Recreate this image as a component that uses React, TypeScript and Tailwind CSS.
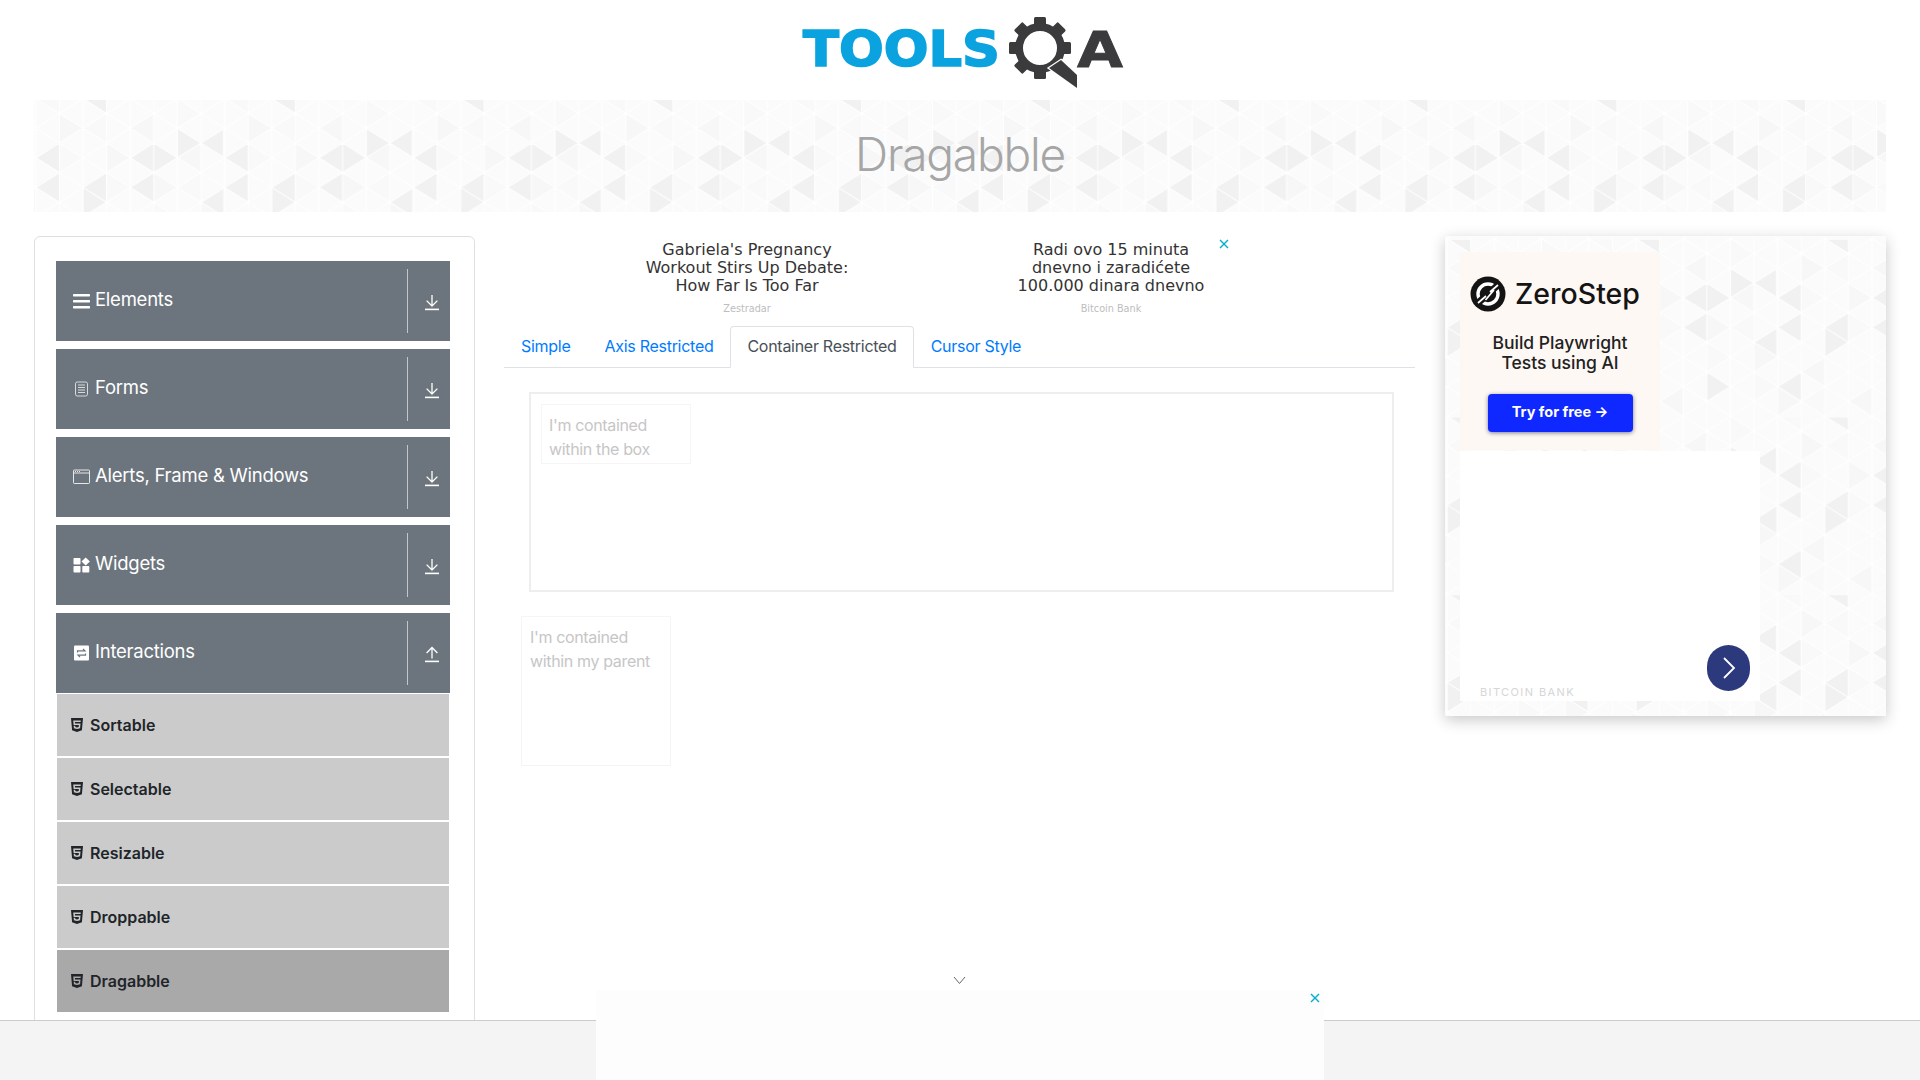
import { FaHtml5 } from "react-icons/fa";

const F = "font-['Inter',sans-serif]";

const DARK: [number, number, number][] = [
  [1, 43, -1], [5, 43, -1], [5, 43, 1], [1, 72.6, -1], [3, 72.6, -1], [5, 72.6, -1], [2, 87.4, 1],
  [3, -16.2, -1], [6, 28.2, 1], [8, 28.2, -1], [8, 87.4, -1], [1, 131.8, -1], [5, 131.8, 1],
];

function triangles() {
  const out: { pts: string; fill: string }[] = [];
  for (let i = -1; i < 10; i++) {
    const baseY = i % 2 === 0 ? 28.2 : 13.4;
    for (let j = -2; j < 7; j++) {
      const y = baseY + j * 29.6;
      const x = 1.8 + i * 23.6;
      for (const d of [-1, 1]) {
        const seed = (i * 7 + j * 13 + (d + 1) * 5 + 100) % 9;
        if (seed === 0 || seed === 4) {
          out.push({ pts: `${x},${y} ${x},${y + 29.6} ${x + d * 23.6},${y + 14.8}`, fill: seed === 0 ? "#f7f7f7" : "#f9f9f9" });
        }
      }
    }
  }
  for (const [c, y, d] of DARK) {
    const x = 1.8 + c * 23.6;
    out.push({ pts: `${x},${y} ${x},${y + 29.6} ${x + d * 23.6},${y + 14.8}`, fill: "#f1f1f1" });
  }
  return out;
}

function lattice() {
  const segs: string[] = [];
  for (let i = -1; i < 10; i++) {
    const x = 1.8 + i * 23.6;
    segs.push(`M${x} -20V200`);
    const baseY = i % 2 === 0 ? 28.2 : 13.4;
    for (let j = -2; j < 7; j++) {
      const y = baseY + j * 29.6;
      segs.push(`M${x} ${y}L${x + 23.6} ${y + 14.8}M${x} ${y}L${x + 23.6} ${y - 14.8}`);
    }
  }
  return segs.join("");
}

function Pattern({ id, dx, dy }: { id: string; dx: number; dy: number }) {
  return (
    <svg className="absolute inset-0 h-full w-full" aria-hidden="true">
      <defs>
        <pattern id={id} width="188.8" height="177.6" patternUnits="userSpaceOnUse" patternTransform={`translate(${dx} ${dy})`}>
          <rect width="188.8" height="177.6" fill="#fbfbfb" />
          {triangles().map((t, k) => (
            <polygon key={k} points={t.pts} fill={t.fill} />
          ))}
          <path d={lattice()} stroke="#ffffff" strokeWidth="1.1" fill="none" />
        </pattern>
      </defs>
      <rect width="100%" height="100%" fill={`url(#${id})`} />
    </svg>
  );
}

function Logo() {
  const teeth = [0, 45, 90, 135, 180, 225, 270, 315];
  return (
    <svg width="325" height="76" viewBox="0 0 325 76" aria-label="ToolsQA">
      <text x="4" y="51" fontFamily="'DejaVu Sans', sans-serif" fontWeight="700" fontSize="50" fill="#0aa3df" stroke="#0aa3df" strokeWidth="1.6" textLength="197" lengthAdjust="spacingAndGlyphs">TOOLS</text>
      <g transform="translate(241 33)">
        {teeth.map((a) => (
          <rect key={a} x="-6" y="-31" width="12" height="11" rx="1.5" fill="#3b3b3d" transform={`rotate(${a})`} />
        ))}
        <circle r="21" fill="none" stroke="#3b3b3d" strokeWidth="8" />
      </g>
      <path d="M250 53l12-8 16 15v13z" fill="#3b3b3d" stroke="#ffffff" strokeWidth="2.5" paintOrder="stroke" />
      <text x="278" y="52" fontFamily="'DejaVu Sans', sans-serif" fontWeight="700" fontSize="50" fill="#3b3b3d" stroke="#3b3b3d" strokeWidth="0.8" textLength="46" lengthAdjust="spacingAndGlyphs">A</text>
    </svg>
  );
}

function Arrow({ up }: { up?: boolean }) {
  return (
    <svg width="16" height="17" viewBox="0 0 16 17" fill="none" stroke="#fff" strokeWidth="1.3">
      {up ? <path d="M8 12.5V1.5M2.6 7L8 1.5 13.4 7" /> : <path d="M8 1v11M2.6 6.6L8 12l5.4-5.4" />}
      <path d="M1 15.4h14" strokeWidth="1.6" />
    </svg>
  );
}

function GroupIcon({ kind }: { kind: string }) {
  if (kind === "menu")
    return (
      <svg width="17" height="16" viewBox="0 0 17 16" fill="#fff">
        <rect y="1" width="17" height="2.4" rx="0.6" />
        <rect y="7" width="17" height="2.4" rx="0.6" />
        <rect y="13" width="17" height="2.4" rx="0.6" />
      </svg>
    );
  if (kind === "form")
    return (
      <svg width="17" height="16" viewBox="0 0 17 16" fill="none" stroke="#d8dadc" strokeWidth="1">
        <rect x="2.5" y="1" width="12" height="14" rx="1.8" />
        <path d="M5 4h7M5 6.5h7M5 9h7M5 11.5h7" />
      </svg>
    );
  if (kind === "window")
    return (
      <svg width="17" height="16" viewBox="0 0 17 16" fill="none" stroke="#e6e7e9" strokeWidth="1">
        <rect x="0.5" y="1" width="16" height="13.5" rx="0.8" />
        <path d="M0.5 4h16" />
        <path d="M2 2.5h1M4 2.5h1M6 2.5h1" />
      </svg>
    );
  if (kind === "widgets")
    return (
      <svg width="17" height="16" viewBox="0 0 17 16" fill="#fff">
        <rect x="0.5" y="1" width="7" height="6.5" rx="0.8" />
        <path d="M12.7 0.4l4.2 4.1-4.2 4.1-4.2-4.1z" />
        <rect x="0.5" y="9" width="7" height="6.5" rx="0.8" />
        <rect x="9.3" y="9" width="7" height="6.5" rx="0.8" />
      </svg>
    );
  return (
    <svg width="17" height="16" viewBox="0 0 17 16">
      <rect x="1" y="0.5" width="15" height="15" rx="1" fill="#fff" />
      <path d="M4.5 7.5V5.8h7.5L10 3.8M12.5 8.5v1.7H5l2 2" stroke="#6c757d" strokeWidth="1.2" fill="none" />
    </svg>
  );
}

function Group({ icon, label, open }: { icon: string; label: string; open?: boolean }) {
  return (
    <div className={`flex h-20 items-center bg-[#6c757d] pl-[17px] text-white ${open ? "" : "mb-2"}`}>
      <div className="flex h-16 flex-1 items-center">
        <div className="mb-[1px] flex w-[17px] shrink-0 items-center justify-center"><GroupIcon kind={icon} /></div>
        <span className="mb-[4px] ml-[5px] text-[18.5px] leading-6 tracking-[-0.25px]">{label}</span>
      </div>
      <div className="flex h-16 w-[43px] items-center justify-center border-l border-[#c4c7ca] pl-[6px] pt-[2px]">
        <Arrow up={open} />
      </div>
    </div>
  );
}

function Item({ label, active }: { label: string; active?: boolean }) {
  return (
    <div className={`mx-[1px] mb-[2px] flex h-[62px] items-center pl-[12px] text-[16px] font-semibold text-[#212529] ${active ? "bg-[#a9a9a9]" : "bg-[#cbcbcb]"}`}>
      <FaHtml5 size={16} className="shrink-0" />
      <span className="ml-[5px]">{label}</span>
    </div>
  );
}

function AdText({ lines, source }: { lines: string[]; source: string }) {
  return (
    <div className="flex w-[364px] flex-col items-center pt-[5px]">
      <div className="text-center font-['DejaVu_Sans',sans-serif] text-[16px] leading-[18px] text-[#333]">
        {lines.map((l) => (
          <div key={l}>{l}</div>
        ))}
      </div>
      <div className="mt-[8px] font-['DejaVu_Sans',sans-serif] text-[9.7px] leading-3 text-[#bdbdbd]">{source}</div>
    </div>
  );
}

function Close({ className }: { className: string }) {
  return (
    <svg className={className} width="10" height="10" viewBox="0 0 10 10" stroke="#00aecd" strokeWidth="1.4" fill="none">
      <path d="M1 1l8 8M9 1L1 9" />
    </svg>
  );
}

export default function App() {
  return (
    <div className={`relative h-[1080px] w-[1920px] overflow-hidden bg-white ${F}`}>
      <header className="flex h-[100px] items-start justify-center pl-[3px] pt-[15px]">
        <Logo />
      </header>

      <div className="relative mx-[34px] flex h-[112px] items-center justify-center overflow-hidden">
        <Pattern id="p1" dx={0} dy={0} />
        <h1 className="relative mb-[4px] text-[46px] font-light leading-[58px] tracking-[-1.2px] text-[#a6a6a6]">Dragabble</h1>
      </div>

      <div className="mx-[34px] mt-[24px] flex items-start">
        <aside className="h-[900px] w-[441px] shrink-0 rounded-md border border-[#dfdfdf] pl-[21px] pr-[24px] pt-[24px]">
          <Group icon="menu" label="Elements" />
          <Group icon="form" label="Forms" />
          <Group icon="window" label="Alerts, Frame & Windows" />
          <Group icon="widgets" label="Widgets" />
          <Group icon="inter" label="Interactions" open />
          <div className="pt-[1px]">
            <Item label="Sortable" />
            <Item label="Selectable" />
            <Item label="Resizable" />
            <Item label="Droppable" />
            <Item label="Dragabble" active />
          </div>
        </aside>

        <main className="ml-[29px] w-[911px] shrink-0">
          <div className="relative flex h-[90px] pl-[61px]">
            <AdText lines={["Gabriela's Pregnancy", "Workout Stirs Up Debate:", "How Far Is Too Far"]} source="Zestradar" />
            <AdText lines={["Radi ovo 15 minuta", "dnevno i zaradićete", "100.000 dinara dnevno"]} source="Bitcoin Bank" />
            <Close className="absolute left-[715px] top-[3px]" />
          </div>

          <nav className="flex h-[42px] border-b border-[#dee2e6] text-[16px] leading-6 tracking-[-0.28px]">
            <a className="px-[17px] py-[8px] text-[#007bff]">Simple</a>
            <a className="px-[17px] py-[8px] text-[#007bff]">Axis Restricted</a>
            <a className="-mb-[1px] h-[42px] rounded-t border border-b-white border-[#dee2e6] bg-white px-[16px] py-[7px] text-[#495057]">Container Restricted</a>
            <a className="px-[17px] py-[8px] text-[#007bff]">Cursor Style</a>
          </nav>

          <div className="ml-[25px] mt-[24px] h-[200px] w-[865px] border-2 border-[#eeeeee] pl-[10px] pt-[10px]">
            <div className="h-[60px] w-[150px] border border-[#f5f5f5] px-[7px] pt-[8px] text-[16px] leading-6 tracking-[-0.35px] text-[#c6c6c6]">
              I'm contained<br />within the box
            </div>
          </div>

          <div className="ml-[17px] mt-[24px] h-[150px] w-[150px] border border-[#f5f5f5] px-[8px] pt-[8px] text-[16px] leading-6 tracking-[-0.35px] text-[#c6c6c6]">
            I'm contained<br />within my parent
          </div>
        </main>

        <section className="relative ml-[30px] h-[480px] w-[441px] shrink-0 shadow-[0_4px_14px_rgba(0,0,0,0.22)]">
          <Pattern id="p2" dx={142} dy={4} />
          <div className="relative ml-[15px] pt-[16px]">
            <div className="flex h-[198px] w-[200px] flex-col items-center bg-[#fdf8f3] pt-[24px]">
              <div className="mr-[10px] flex items-center">
                <svg width="36" height="36" viewBox="0 0 36 36" className="shrink-0">
                  <circle cx="18" cy="18" r="17.5" fill="#141414" />
                  <circle cx="18" cy="18" r="10" fill="none" stroke="#fff" strokeWidth="3.4" />
                  <path d="M8 27L28 9" stroke="#141414" strokeWidth="7" />
                  <path d="M8 27L16 20M20 16L28 9M15.5 24L24 14" stroke="#fff" strokeWidth="1.7" />
                </svg>
                <span className="ml-[9px] text-[28.5px] font-medium leading-9 text-[#141414]">ZeroStep</span>
              </div>
              <div className="mt-[21px] text-center text-[17.5px] font-medium leading-[20px] text-[#222]">
                Build Playwright<br />Tests using AI
              </div>
              <div className="mt-[21px] flex h-[38px] w-[145px] items-center justify-center rounded bg-[#0f28ff] pb-[2px] text-[14.5px] font-bold text-white shadow-[0_1px_4px_rgba(0,0,60,0.5)]">
                Try for free →
              </div>
            </div>
            <div className="mt-[1px] flex h-[250px] w-[300px] items-end justify-between bg-white">
              <div className="pb-[3px] pl-[20px] text-[11px] leading-3 tracking-[1.4px] text-[#d6d6d6]">BITCOIN BANK</div>
              <div className="mb-[10px] mr-[10px] flex h-[46px] w-[43px] items-center justify-center rounded-full bg-[#2c3a7d]">
                <svg width="16" height="24" viewBox="0 0 16 24" fill="none" stroke="#fff" strokeWidth="1.8">
                  <path d="M3 2l10 10L3 22" />
                </svg>
              </div>
            </div>
          </div>
        </section>
      </div>

      <div className="absolute bottom-0 left-0 right-0 h-[60px] border-t border-[#cccccc] bg-[#f4f4f4]" />
      <div className="absolute bottom-0 left-[596px] h-[90px] w-[728px] bg-[#fdfdfd]" />
      <svg className="absolute left-[953px] top-[976px]" width="13" height="9" viewBox="0 0 13 9" fill="none" stroke="#666" strokeWidth="1">
        <path d="M1 1l5.5 6.5L12 1" />
      </svg>
      <Close className="absolute left-[1310px] top-[993px]" />
    </div>
  );
}
